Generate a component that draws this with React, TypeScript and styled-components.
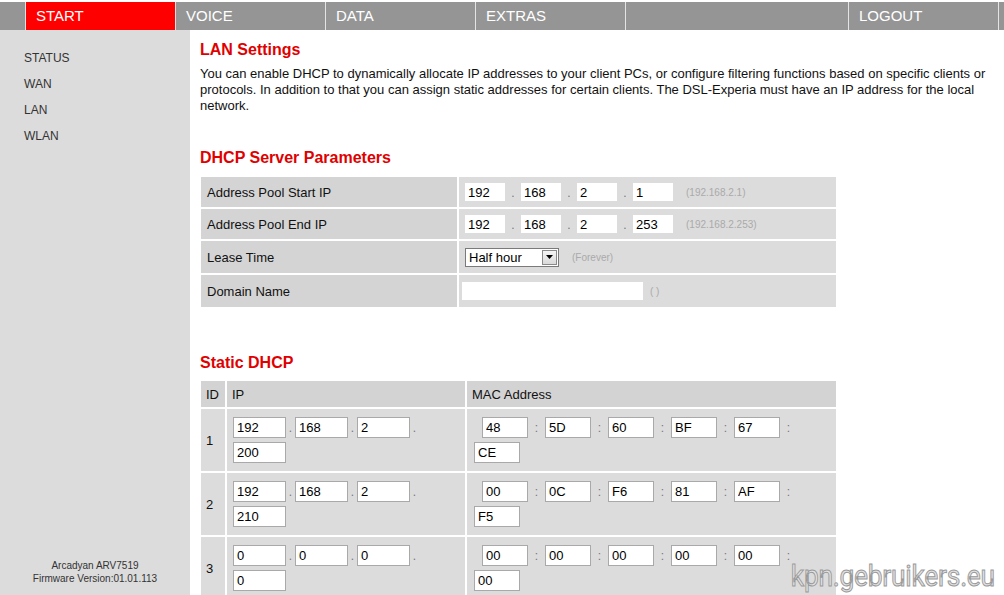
import React from 'react';
import styled, { createGlobalStyle } from 'styled-components';

const GlobalStyle = createGlobalStyle`
	html, body {
		margin: 0;
		padding: 0;
		background: #fff;
	}
	body {
		font-family: "Liberation Sans", Arial, sans-serif;
		overflow: hidden;
	}
`;

const navItems = [
	{ label: '', width: 25 },
	{ label: 'START', width: 150, active: true },
	{ label: 'VOICE', width: 150 },
	{ label: 'DATA', width: 150 },
	{ label: 'EXTRAS', width: 150 },
	{ label: '', width: 223 },
	{ label: 'LOGOUT', width: 150 },
];

const sideLinks = ['STATUS', 'WAN', 'LAN', 'WLAN'];

const staticRows = [
	{ id: 1, ip: ['192', '168', '2', '200'], mac: ['48', '5D', '60', 'BF', '67', 'CE'] },
	{ id: 2, ip: ['192', '168', '2', '210'], mac: ['00', '0C', 'F6', '81', 'AF', 'F5'] },
	{ id: 3, ip: ['0', '0', '0', '0'], mac: ['00', '00', '00', '00', '00', '00'] },
];

const IpFields = ({ parts }: { parts: string[] }) => (
	<>
		{parts.map((part, i) => (
			<React.Fragment key={i}>
				<PlainInput defaultValue={part} />
				{i < parts.length - 1 && <PlainDot>.</PlainDot>}
			</React.Fragment>
		))}
	</>
);

export default function App() {
	return (
		<Page>
			<GlobalStyle />
			<NavBar>
				{navItems.map((item, i) => (
					<NavItem key={i} $w={item.width} $active={item.active} $first={i === 0}>
						{item.label}
					</NavItem>
				))}
				<NavRest />
			</NavBar>

			<Body>
				<Sidebar>
					{sideLinks.map(link => (
						<SideLink key={link}>{link}</SideLink>
					))}
					<SideFooter>
						Arcadyan ARV7519
						<br />
						Firmware Version:01.01.113
					</SideFooter>
				</Sidebar>

				<Main>
					<Title>LAN Settings</Title>
					<Intro>
						You can enable DHCP to dynamically allocate IP addresses to your client PCs, or configure filtering
						functions based on specific clients or protocols. In addition to that you can assign static addresses
						for certain clients. The DSL-Experia must have an IP address for the local network.
					</Intro>

					<SectionTitle $top={34}>DHCP Server Parameters</SectionTitle>
					<ParamGrid>
						<LabelCell $h={30}>Address Pool Start IP</LabelCell>
						<ValueCell>
							<IpFields parts={['192', '168', '2', '1']} />
							<Hint>(192.168.2.1)</Hint>
						</ValueCell>

						<LabelCell $h={30}>Address Pool End IP</LabelCell>
						<ValueCell>
							<IpFields parts={['192', '168', '2', '253']} />
							<Hint>(192.168.2.253)</Hint>
						</ValueCell>

						<LabelCell $h={32}>Lease Time</LabelCell>
						<ValueCell>
							<SelectBox>
								<SelectText>Half hour</SelectText>
								<SelectButton>
									<svg width="7" height="4" viewBox="0 0 7 4">
										<path d="M0 0h7L3.5 4z" fill="#000" />
									</svg>
								</SelectButton>
							</SelectBox>
							<Hint>(Forever)</Hint>
						</ValueCell>

						<LabelCell $h={32}>Domain Name</LabelCell>
						<ValueCell>
							<DomainInput defaultValue="" />
							<Hint $gap={7}>( )</Hint>
						</ValueCell>
					</ParamGrid>

					<SectionTitle $top={46}>Static DHCP</SectionTitle>
					<StaticGrid>
						<HeadCell>ID</HeadCell>
						<HeadCell>IP</HeadCell>
						<HeadCell>MAC Address</HeadCell>

						{staticRows.map(row => (
							<React.Fragment key={row.id}>
								<IdCell>{row.id}</IdCell>
								<FieldCell $pad={6}>
									{row.ip.map((part, i) => (
										<React.Fragment key={i}>
											<BoxInput $w={53} defaultValue={part} />
											{i < 3 && <Sep $w={9}>.</Sep>}
										</React.Fragment>
									))}
								</FieldCell>
								<FieldCell $pad={7}>
									<Lead />
									{row.mac.map((part, i) => (
										<React.Fragment key={i}>
											<BoxInput $w={46} defaultValue={part} />
											{i < 5 && <Sep $w={17}>:</Sep>}
										</React.Fragment>
									))}
								</FieldCell>
							</React.Fragment>
						))}
					</StaticGrid>
				</Main>
			</Body>

			<Watermark>kpn.gebruikers.eu</Watermark>
		</Page>
	);
}

const Page = styled.div`
	position: relative;
	width: 1004px;
	height: 595px;
	display: flex;
	flex-direction: column;
	overflow: hidden;
`;

const NavBar = styled.nav`
	display: flex;
	height: 28px;
	margin-top: 2px;
	flex-shrink: 0;
	background: #959595;
`;

const NavItem = styled.div<{ $w: number; $active?: boolean; $first?: boolean }>`
	box-sizing: border-box;
	width: ${props => props.$w}px;
	flex-shrink: 0;
	padding-left: 10px;
	background: ${props => props.$active ? '#ff0000' : '#959595'};
	border-left: ${props => props.$first ? 'none' : '1px solid #e4e4e4'};
	color: #fff;
	font-size: 15px;
	line-height: 28px;
`;

const NavRest = styled.div`
	flex: 1;
	border-left: 1px solid #e4e4e4;
`;

const Body = styled.div`
	display: flex;
	flex: 1;
	min-height: 0;
`;

const Sidebar = styled.aside`
	width: 190px;
	flex-shrink: 0;
	display: flex;
	flex-direction: column;
	padding-top: 15px;
	box-sizing: border-box;
	background: #dcdcdc;
`;

const SideLink = styled.div`
	padding-left: 24px;
	font-size: 12px;
	line-height: 26px;
	color: #333;
`;

const SideFooter = styled.div`
	margin-top: auto;
	padding-bottom: 10px;
	text-align: center;
	font-size: 10px;
	line-height: 13px;
	color: #333;
`;

const Main = styled.main`
	flex: 1;
	padding: 10px 6px 0 10px;
`;

const Title = styled.h1`
	margin: 0;
	font-size: 16px;
	line-height: 20px;
	font-weight: bold;
	color: #e00000;
`;

const Intro = styled.p`
	margin: 6px 0 0;
	font-size: 13px;
	line-height: 16px;
	color: #111;
`;

const SectionTitle = styled.h2<{ $top: number }>`
	margin: ${props => props.$top}px 0 0;
	font-size: 16px;
	line-height: 20px;
	font-weight: bold;
	color: #e00000;
`;

const ParamGrid = styled.div`
	display: grid;
	grid-template-columns: 256px 377px;
	gap: 2px;
	width: 635px;
	margin: 9px 0 0 1px;
	background: #fff;
`;

const LabelCell = styled.div<{ $h: number }>`
	display: flex;
	align-items: center;
	height: ${props => props.$h}px;
	padding-left: 6px;
	background: #d4d4d4;
	font-size: 13px;
	color: #111;
`;

const ValueCell = styled.div`
	display: flex;
	align-items: center;
	padding-left: 6px;
	background: #dcdcdc;
`;

const PlainInput = styled.input`
	box-sizing: border-box;
	width: 40px;
	height: 18px;
	padding: 0 3px;
	border: none;
	outline: none;
	background: #fff;
	font-family: "Liberation Sans", Arial, sans-serif;
	font-size: 13px;
	color: #000;
`;

const PlainDot = styled.span`
	width: 16px;
	text-align: center;
	font-size: 12px;
	line-height: 16px;
	padding-top: 2px;
	color: #777;
`;

const Hint = styled.span<{ $gap?: number }>`
	margin-left: ${props => props.$gap ?? 13}px;
	font-size: 10px;
	color: #aaa;
`;

const SelectBox = styled.div`
	display: flex;
	align-items: center;
	box-sizing: border-box;
	width: 94px;
	height: 19px;
	border: 1px solid #7a7a7a;
	background: #fff;
`;

const SelectText = styled.span`
	flex: 1;
	padding-left: 3px;
	font-size: 13px;
	color: #000;
`;

const SelectButton = styled.span`
	display: flex;
	align-items: center;
	justify-content: center;
	box-sizing: border-box;
	width: 15px;
	height: 15px;
	margin-right: 1px;
	border: 1px solid #8a8a8a;
	background: linear-gradient(#f4f4f4, #dadada);
`;

const DomainInput = styled(PlainInput)`
	width: 181px;
	margin-left: -3px;
`;

const StaticGrid = styled.div`
	display: grid;
	grid-template-columns: 24px 238px 369px;
	gap: 2px;
	width: 635px;
	margin: 8px 0 0 1px;
	background: #fff;
`;

const HeadCell = styled.div`
	display: flex;
	align-items: center;
	height: 26px;
	padding-left: 5px;
	background: #d3d3d3;
	font-size: 13px;
	color: #111;
`;

const IdCell = styled.div`
	display: flex;
	align-items: center;
	padding-left: 5px;
	background: #dcdcdc;
	font-size: 13px;
	color: #111;
`;

const FieldCell = styled.div<{ $pad: number }>`
	display: flex;
	flex-wrap: wrap;
	align-items: center;
	align-content: center;
	row-gap: 4px;
	padding: 8px ${props => props.$pad}px;
	background: #dcdcdc;
`;

const Lead = styled.span`
	width: 8px;
`;

const BoxInput = styled.input<{ $w: number }>`
	box-sizing: border-box;
	width: ${props => props.$w}px;
	height: 21px;
	padding: 0 3px;
	border: 1px solid #a9a9a9;
	outline: none;
	background: #fff;
	font-family: "Liberation Sans", Arial, sans-serif;
	font-size: 13px;
	color: #000;
`;

const Sep = styled.span<{ $w: number }>`
	width: ${props => props.$w}px;
	text-align: center;
	font-size: 12px;
	line-height: 19px;
	padding-top: 2px;
	color: #777;
`;

const Watermark = styled.div`
	position: absolute;
	right: 9px;
	bottom: 2px;
	font-family: Roboto, "Liberation Sans", sans-serif;
	font-size: 30px;
	letter-spacing: -0.3px;
	color: #e2e2e2;
	-webkit-text-stroke: 1px #999;
	transform: scaleX(0.88);
	transform-origin: right bottom;
	pointer-events: none;
`;
